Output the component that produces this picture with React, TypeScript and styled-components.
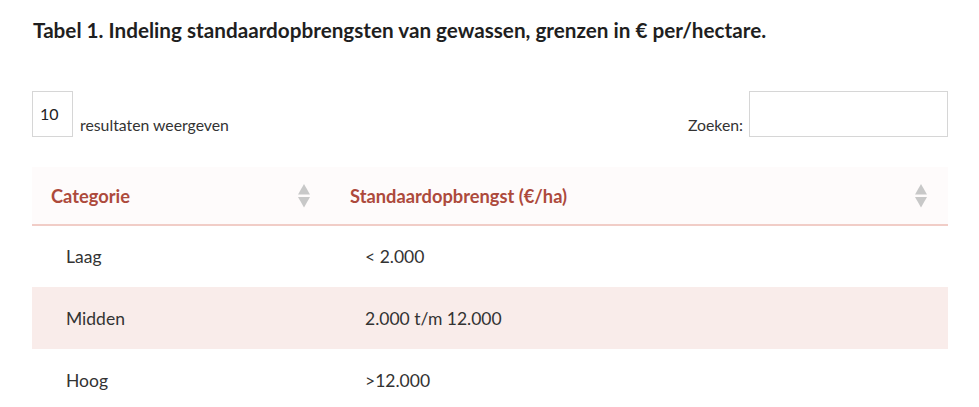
import styled, { createGlobalStyle } from "styled-components";

const GlobalStyle = createGlobalStyle`
  body {
    margin: 0;
    background: #ffffff;
    font-family: "Lato", "Noto Sans", sans-serif;
    color: #333333;
  }
`;

const Page = styled.div`
  width: 979px;
  height: 407px;
  overflow: hidden;
  padding: 16px 31px 0 32px;
  box-sizing: border-box;
`;

const Title = styled.h2`
  margin: 0 0 0 1px;
  font-size: 20.7px;
  font-weight: 700;
  color: #1f1f1f;
  line-height: 28px;
`;

const Controls = styled.div`
  display: flex;
  justify-content: space-between;
  align-items: flex-end;
  margin-top: 47px;
`;

const LengthControl = styled.label`
  display: flex;
  align-items: flex-end;
  gap: 7px;
  font-size: 15.8px;
  color: #333;
`;

const LengthBox = styled.div`
  width: 41px;
  height: 46px;
  border: 1px solid #d6d6d6;
  box-sizing: border-box;
  padding: 12px 0 0 7px;
  font-size: 16px;
  color: #222;
`;

const LengthText = styled.span`
  padding-bottom: 3px;
`;

const SearchControl = styled.label`
  display: flex;
  align-items: flex-end;
  gap: 6px;
  font-size: 15.8px;
  color: #333;
`;

const SearchText = styled.span`
  padding-bottom: 3px;
`;

const SearchInput = styled.input`
  width: 199px;
  height: 46px;
  border: 1px solid #d6d6d6;
  box-sizing: border-box;
  outline: none;
`;

const Table = styled.table`
  width: 916px;
  margin-top: 30px;
  border-collapse: collapse;
  font-size: 17.5px;
`;

const HeadCell = styled.th<{ $width?: number }>`
  width: ${(p) => (p.$width ? `${p.$width}px` : "auto")};
  height: 58px;
  padding: 0 20px 0 19px;
  box-sizing: border-box;
  text-align: left;
  color: #ad4a3c;
  font-weight: 700;
  font-size: 18.3px;
  background: #fefbfb;
  border-bottom: 2px solid #f1cdc7;
`;

const HeadInner = styled.div`
  display: flex;
  align-items: center;
  justify-content: space-between;
`;

const Row = styled.tr<{ $striped?: boolean }>`
  background: ${(p) => (p.$striped ? "#f9ecea" : "#ffffff")};
`;

const Cell = styled.td`
  height: 62px;
  padding: 0 20px 0 34px;
  box-sizing: border-box;
  color: #333;
`;

const SortIcon = () => (
  <svg width="14" height="26" viewBox="0 0 14 26">
    <polygon points="7,1 13,11.5 1,11.5" fill="#c8c8c8" />
    <polygon points="1,14 13,14 7,24.5" fill="#c8c8c8" />
  </svg>
);

const rows = [
  { cat: "Laag", value: "< 2.000" },
  { cat: "Midden", value: "2.000 t/m 12.000" },
  { cat: "Hoog", value: ">12.000" },
];

export default function App() {
  return (
    <>
      <GlobalStyle />
      <Page>
        <Title>Tabel 1. Indeling standaardopbrengsten van gewassen, grenzen in € per/hectare.</Title>
        <Controls>
          <LengthControl>
            <LengthBox>10</LengthBox>
            <LengthText>resultaten weergeven</LengthText>
          </LengthControl>
          <SearchControl>
            <SearchText>Zoeken:</SearchText>
            <SearchInput type="search" />
          </SearchControl>
        </Controls>
        <Table>
          <thead>
            <tr>
              <HeadCell $width={299}>
                <HeadInner>
                  Categorie
                  <SortIcon />
                </HeadInner>
              </HeadCell>
              <HeadCell>
                <HeadInner>
                  Standaardopbrengst (€/ha)
                  <SortIcon />
                </HeadInner>
              </HeadCell>
            </tr>
          </thead>
          <tbody>
            {rows.map((r, i) => (
              <Row key={r.cat} $striped={i % 2 === 1}>
                <Cell>{r.cat}</Cell>
                <Cell>{r.value}</Cell>
              </Row>
            ))}
          </tbody>
        </Table>
      </Page>
    </>
  );
}
